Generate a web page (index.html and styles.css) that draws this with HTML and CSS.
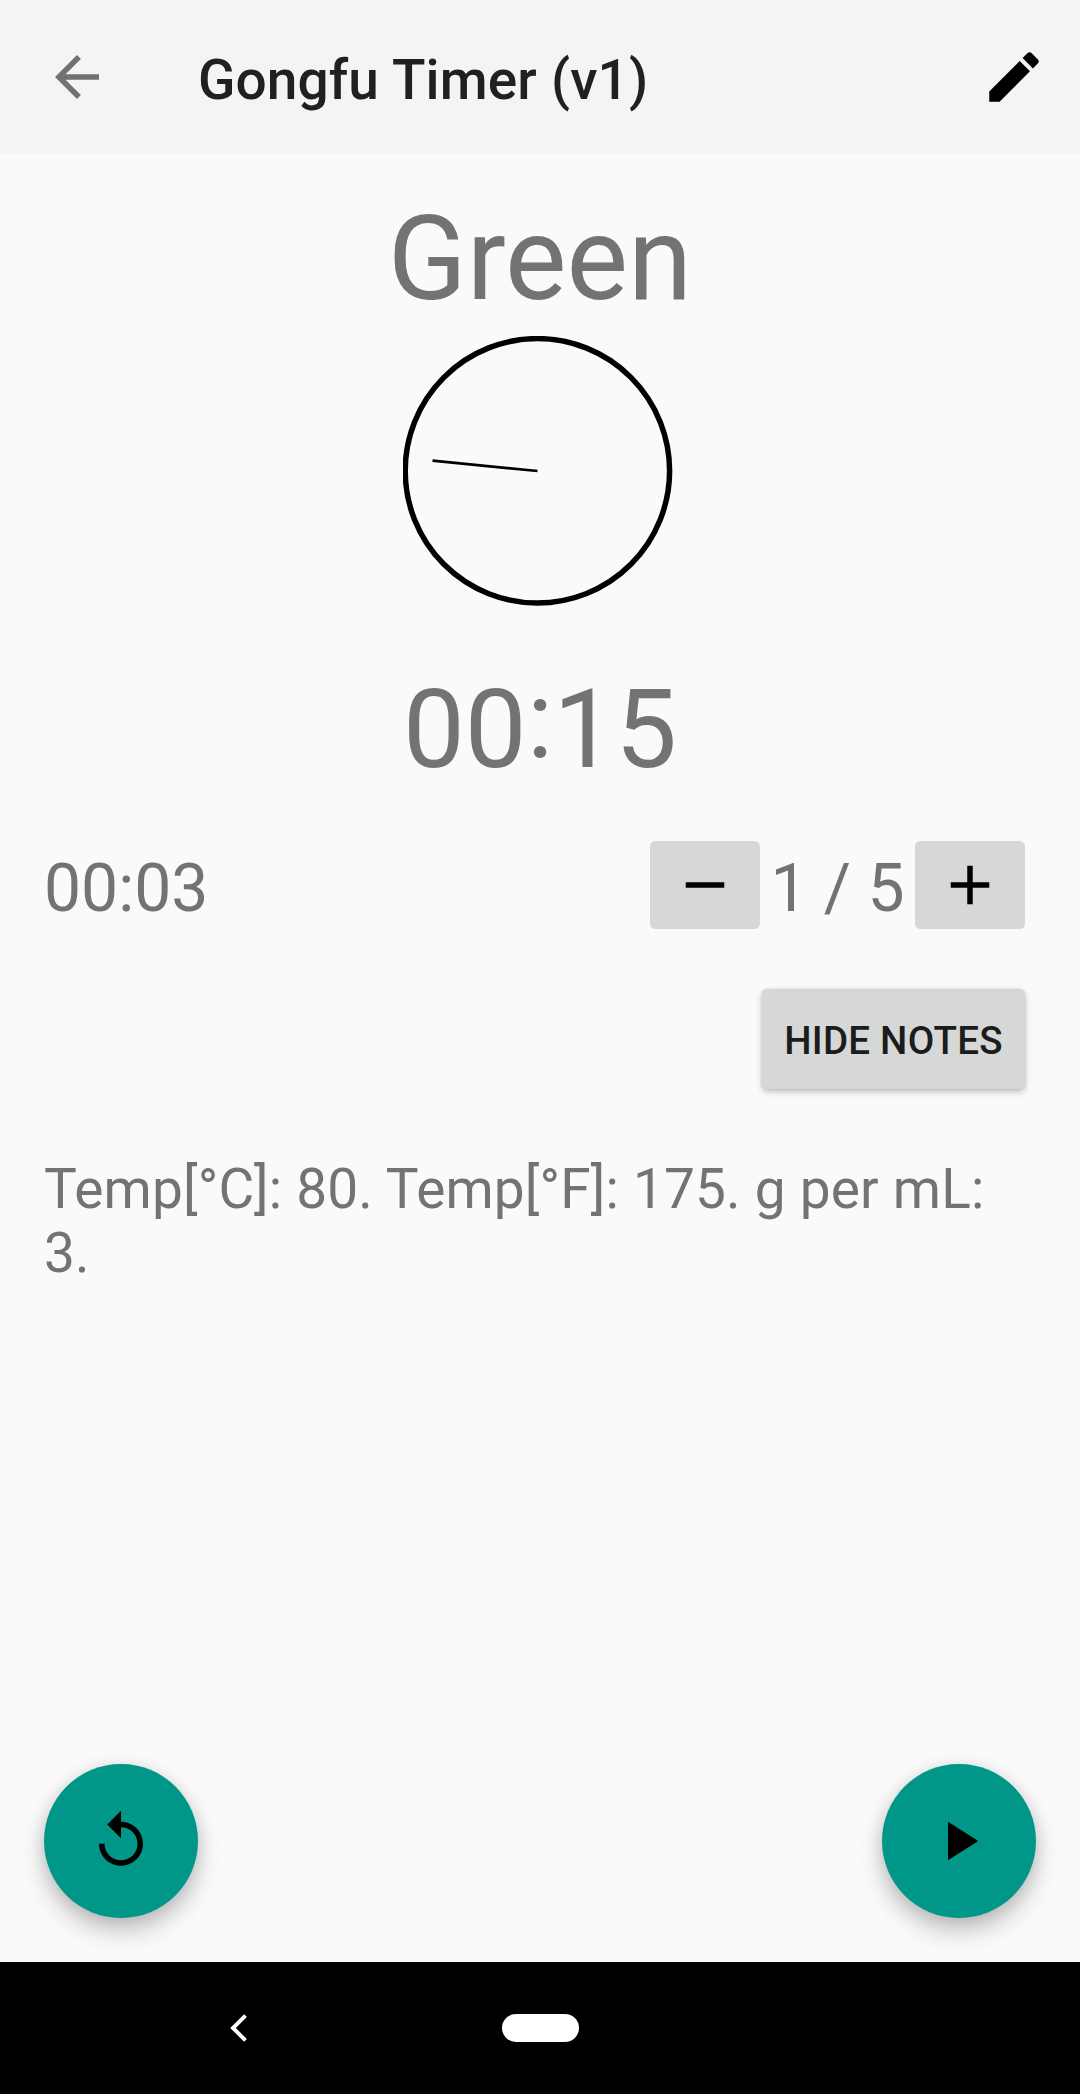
FILE: index.html
```html
<!DOCTYPE html>
<html lang="en">
<head>
<meta charset="utf-8">
<title>Gongfu Timer</title>
<link rel="stylesheet" href="styles.css">
</head>
<body>
<header class="app-bar">
  <svg class="icon back" viewBox="0 0 24 24"><path d="M20 11H7.83l5.59-5.59L12 4l-8 8 8 8 1.41-1.41L7.83 13H20z"/></svg>
  <h1 class="title">Gongfu Timer (v1)</h1>
  <svg class="icon" viewBox="0 0 24 24"><path d="M3 17.25V21h3.75L17.81 9.94l-3.75-3.75L3 17.25zM20.71 7.04c.39-.39.39-1.02 0-1.41l-2.34-2.34c-.39-.39-1.02-.39-1.41 0l-1.83 1.83 3.75 3.75 1.83-1.83z"/></svg>
</header>
<main class="content">
  <h2 class="tea">Green</h2>
  <svg class="clock" viewBox="0 0 270 270">
    <circle cx="134.4" cy="134.8" r="132.2" stroke-width="5.5"/>
    <path d="M134.5 135L29.5 124.6" stroke-width="2.75"/>
  </svg>
  <div class="time">00<span class="colon">:</span>15</div>
  <div class="controls">
    <div class="elapsed">00:03</div>
    <div class="stepper">
      <button class="btn step"><svg class="icon" viewBox="0 0 24 24"><path d="M19 13H5v-2h14z"/></svg></button>
      <span class="count">1 / 5</span>
      <button class="btn step"><svg class="icon" viewBox="0 0 24 24"><path d="M19 13h-6v6h-2v-6H5v-2h6V5h2v6h6z"/></svg></button>
    </div>
  </div>
  <button class="btn notes-toggle">HIDE NOTES</button>
  <p class="notes">Temp[°C]: 80. Temp[°F]: 175. g per mL: 3.</p>
  <div class="fabs">
    <button class="fab"><svg class="icon" viewBox="0 0 24 24"><path d="M12 5V1L7 6l5 5V7c3.31 0 6 2.69 6 6s-2.69 6-6 6-6-2.69-6-6H4c0 4.42 3.58 8 8 8s8-3.58 8-8-3.58-8-8-8z"/></svg></button>
    <button class="fab"><svg class="icon" viewBox="0 0 24 24"><path d="M8 5v14l11-7z"/></svg></button>
  </div>
</main>
<nav class="nav-bar">
  <svg class="nav-back" viewBox="0 0 18 30"><path d="M15.5 2.6L3 15l12.500 12.400"/></svg>
  <span class="nav-home"></span>
</nav>
</body>
</html>
```
FILE: styles.css
```css
* { box-sizing: border-box; }

body {
  margin: 0;
  height: 2094px;
  display: flex;
  flex-direction: column;
  overflow: hidden;
  background: #fafafa;
  color: #737373;
  font-family: Roboto, sans-serif;
}

button {
  border: 0;
  padding: 0;
  font-family: inherit;
}

h1, h2, p { margin: 0; }

.icon {
  display: block;
  flex: none;
  width: 66px;
  height: 66px;
  fill: #000;
}

.icon.back { fill: #727272; }

.app-bar {
  display: flex;
  align-items: center;
  height: 154px;
  padding: 0 33px 0 44px;
  background: #f4f4f4;
}

.title {
  flex: 1;
  padding: 6px 0 0 88px;
  font-size: 55px;
  font-weight: 500;
  line-height: 66px;
  letter-spacing: .08px;
  word-spacing: .6px;
  color: #202020;
}

.content {
  flex: 1;
  display: flex;
  flex-direction: column;
  padding: 37px 44px 44px;
}

.tea {
  text-align: center;
  font-size: 116px;
  font-weight: 400;
  line-height: 136px;
}

.clock {
  width: 270px;
  height: 270px;
  margin: 9px 0 0 359px;
  fill: none;
  stroke: #000;
}

.time {
  margin-top: 58px;
  text-align: center;
  font-size: 110px;
  line-height: 131px;
}

.colon {
  line-height: 0;
  vertical-align: 10px;
}

.controls {
  display: flex;
  justify-content: space-between;
  align-items: center;
  height: 88px;
  margin: 46px 11px 0 0;
  font-size: 66px;
  line-height: 78px;
}

.elapsed { padding-top: 7px; }

.stepper {
  display: flex;
  align-items: center;
}

.count {
  width: 155px;
  padding-top: 7px;
  text-align: center;
}

.btn {
  border-radius: 5.5px;
  background: #d6d8d7;
}

.step {
  display: flex;
  align-items: center;
  justify-content: center;
  width: 110px;
  height: 88px;
}

.notes-toggle {
  align-self: flex-end;
  width: 263px;
  height: 100px;
  margin: 60px 11px 0 0;
  padding-top: 3px;
  font-size: 38.5px;
  font-weight: 500;
  letter-spacing: .25px;
  white-space: nowrap;
  color: #1c1c1c;
  box-shadow: 0 3px 6px rgba(0, 0, 0, .22), 0 0 3px rgba(0, 0, 0, .12);
}

.notes {
  margin-top: 68px;
  font-size: 55px;
  line-height: 64px;
  letter-spacing: .14px;
  word-spacing: .2px;
}

.fabs {
  display: flex;
  justify-content: space-between;
  margin-top: auto;
}

.fab {
  display: flex;
  align-items: center;
  justify-content: center;
  width: 154px;
  height: 154px;
  border-radius: 50%;
  background: #009688;
  box-shadow: 0 13px 24px rgba(0, 0, 0, .22), 0 2px 16px rgba(0, 0, 0, .1);
}

.nav-bar {
  display: grid;
  grid-template-columns: 478px 1fr;
  align-items: center;
  height: 132px;
  background: #000;
}

.nav-back {
  justify-self: center;
  width: 18px;
  height: 30px;
  fill: none;
  stroke: #fff;
  stroke-width: 3.9;
}

.nav-home {
  width: 77px;
  height: 28px;
  margin-left: 24px;
  border-radius: 14px;
  background: #fff;
}
```
